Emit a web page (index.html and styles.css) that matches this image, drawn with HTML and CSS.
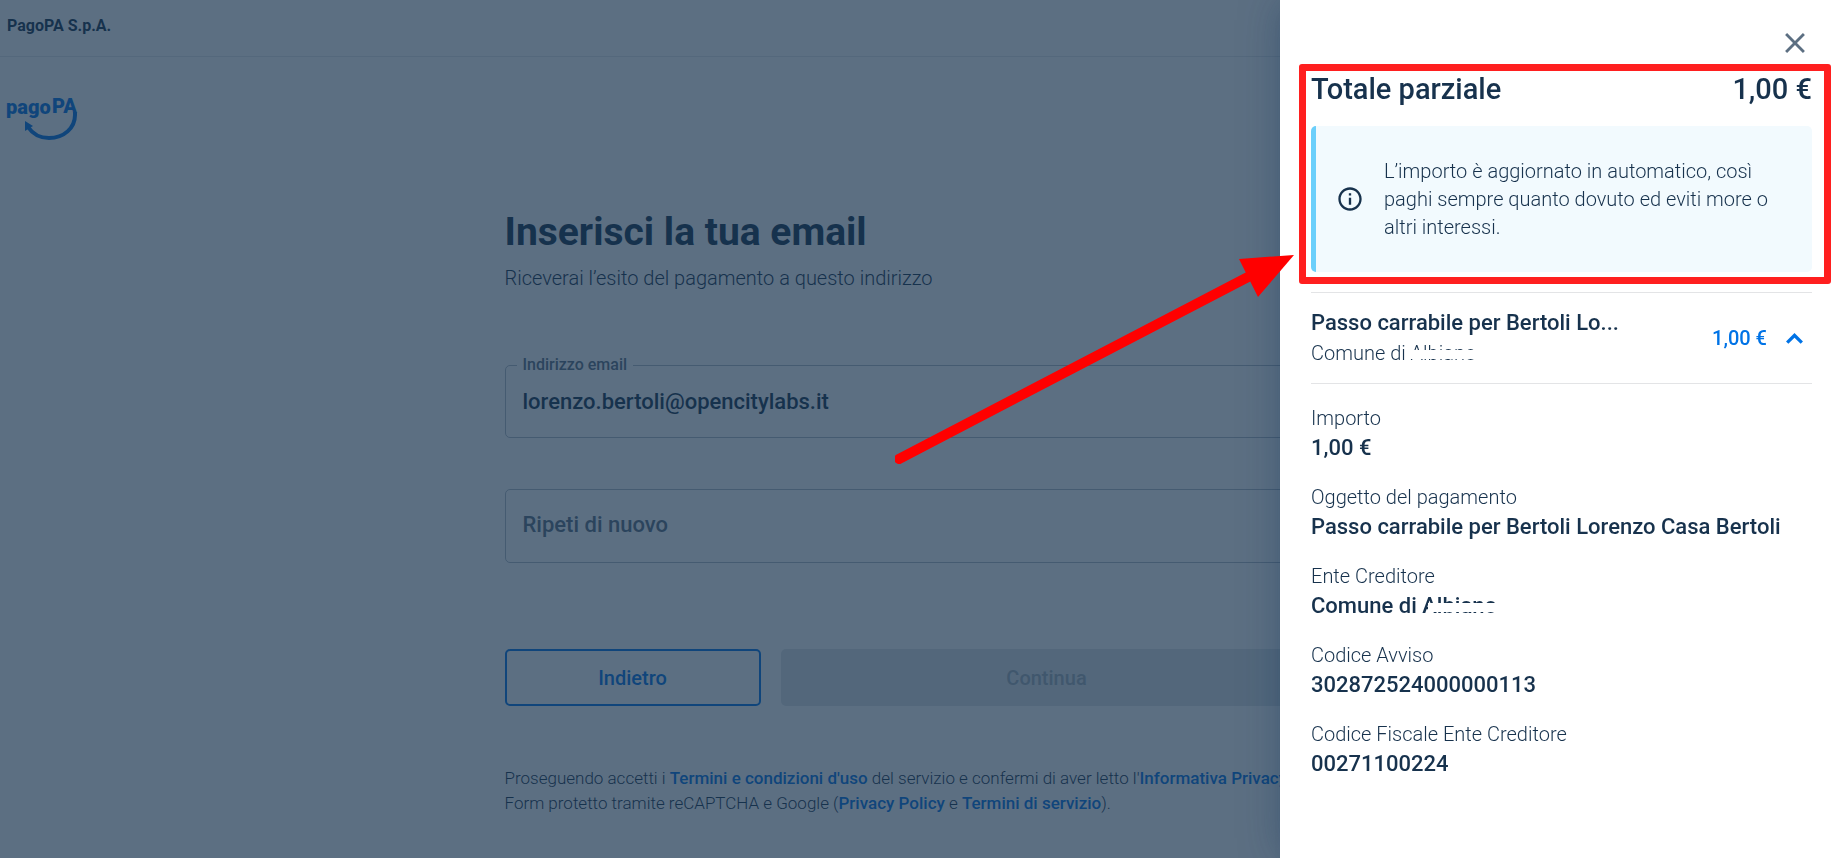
FILE: index.html
```html
<!DOCTYPE html>
<html lang="it">
<head>
    <meta charset="UTF-8">
    <title>pagoPA</title>
    <link rel="stylesheet" href="styles.css">
</head>
<body>
<div class="page">
    <header class="topbar">PagoPA S.p.A.</header>
    <div class="brand">
        <svg class="logo" width="74" height="46" viewBox="0 0 74 46">
            <text x="-1" y="19" font-size="20">pago</text>
            <text x="45" y="18" font-size="20">PA</text>
            <path d="M68 17V20C68 33 57 43 42 43C32 43 25 38 21 32" fill="none" stroke="#0073e6" stroke-width="4"/>
            <path d="M18 26L26 31L18 36Z"/>
        </svg>
    </div>
    <main class="content">
        <h1>Inserisci la tua email</h1>
        <p class="subtitle">Riceverai l’esito del pagamento a questo indirizzo</p>
        <form>
            <fieldset class="field">
                <legend><label for="email">Indirizzo email</label></legend>
                <input type="email" id="email" value="lorenzo.bertoli@opencitylabs.it">
            </fieldset>
            <div class="field repeat">
                <input type="email" id="confirm" placeholder="Ripeti di nuovo" aria-label="Ripeti di nuovo">
            </div>
            <div class="buttons">
                <button type="button" class="back">Indietro</button>
                <button type="submit" class="next" disabled>Continua</button>
            </div>
        </form>
        <p class="legal">
            Proseguendo accetti i <a href="#">Termini e condizioni d'uso</a> del servizio e confermi di aver letto l'<a href="#">Informativa Privacy</a><br>
            Form protetto tramite reCAPTCHA e Google (<a href="#">Privacy Policy</a> e <a href="#">Termini di servizio</a>).
        </p>
    </main>
</div>

<div class="backdrop"></div>

<aside class="drawer">
    <button type="button" class="close" aria-label="Chiudi">
        <svg width="34" height="34" viewBox="0 0 24 24" fill="#5c6f82"><path d="M19 6.41L17.59 5L12 10.59L6.41 5L5 6.41L10.59 12L5 17.59L6.41 19L12 13.41L17.59 19L19 17.59L13.41 12Z"/></svg>
    </button>
    <div class="total">
        <h2>Totale parziale</h2>
        <span>1,00 €</span>
    </div>
    <div class="alert">
        <svg width="28" height="28" viewBox="0 0 24 24" fill="#17324d"><path d="M11 7h2v2h-2zm0 4h2v6h-2zm1-9C6.480 2 2 6.480 2 12s4.480 10 10 10 10-4.480 10-10S17.520 2 12 2zm0 18c-4.410 0-8-3.590-8-8s3.590-8 8-8 8 3.590 8 8-3.590 8-8 8z"/></svg>
        <p>L’importo è aggiornato in automatico, così paghi sempre quanto dovuto ed eviti more o altri interessi.</p>
    </div>
    <button type="button" class="item">
        <span class="item-text">
            <strong>Passo carrabile per Bertoli Lo...</strong>
            <span class="name">Comune di <span class="erased">Albiano</span></span>
        </span>
        <span class="price">1,00 €</span>
        <svg width="29" height="29" viewBox="0 0 24 24" fill="#0073e6"><path d="M12 7.500l-7 7 1.900 1.900L12 11.300l5.100 5.100L19 14.500z"/></svg>
    </button>
    <dl class="details">
        <dt>Importo</dt>
        <dd>1,00 €</dd>
        <dt>Oggetto del pagamento</dt>
        <dd>Passo carrabile per Bertoli Lorenzo Casa Bertoli</dd>
        <dt>Ente Creditore</dt>
        <dd>Comune di <span class="erased">Albiano</span></dd>
        <dt>Codice Avviso</dt>
        <dd>302872524000000113</dd>
        <dt>Codice Fiscale Ente Creditore</dt>
        <dd>00271100224</dd>
    </dl>
    <div class="highlight"></div>
    <svg class="arrow" width="400" height="210" viewBox="0 0 400 210">
        <path d="M4 205L353 23" stroke="#f00" stroke-width="10" stroke-linecap="round"/>
        <path d="M344 5L399 1L363 43Z" fill="#f00"/>
    </svg>
</aside>
</body>
</html>
```

FILE: styles.css
```css
* {
    box-sizing: border-box;
    margin: 0;
    padding: 0;
}
body {
    font-family: Roboto, "Liberation Sans", sans-serif;
    font-size: 20px;
    font-weight: 350;
    color: #17324d;
    background: #fff;
    overflow: hidden;
}
button, input {
    font: inherit;
    color: inherit;
    background: none;
    border: 0;
}
a {
    color: #0073e6;
    font-weight: 500;
    text-decoration: none;
}
.page {
    min-height: 100vh;
}
.topbar {
    height: 57px;
    padding: 0 7px;
    line-height: 52px;
    font-size: 16px;
    font-weight: 700;
    border-bottom: 1px solid #e3e7eb;
}
.brand {
    height: 147px;
    padding: 38px 7px 0;
}
.logo {
    display: block;
    overflow: visible;
    fill: #0073e6;
    font-weight: 900;
}
.content {
    width: 832px;
    max-width: 100%;
    margin: 0 auto;
    padding-right: 24px;
}
h1 {
    line-height: 57px;
    font-size: 39px;
    font-weight: 700;
}
.subtitle {
    line-height: 34px;
}
.field {
    height: 83px;
    margin-top: 60px;
    border: 1px solid #b1bbc6;
    border-radius: 5px;
    font-size: 22px;
    font-weight: 500;
}
.field legend {
    margin-left: 11px;
    padding: 0 6px;
    line-height: 20px;
    font-size: 16px;
    color: #5c6f82;
}
.field input {
    display: block;
    width: 100%;
    height: 52px;
    padding: 0 17px;
    outline: 0;
}
.field input::placeholder {
    color: #5c6f82;
    opacity: 1;
}
.repeat {
    height: 74px;
    margin-top: 51px;
}
.repeat input {
    height: 68px;
}
.buttons {
    display: grid;
    grid-template-columns: 256fr 532fr;
    gap: 20px;
    margin-top: 86px;
}
.buttons button {
    height: 57px;
    border-radius: 5px;
    font-weight: 500;
}
.back {
    border: 2px solid #0073e6;
    color: #0073e6;
}
.buttons .next {
    color: #a2adb8;
    background: #dfe5e8;
}
.legal {
    margin-top: 60px;
    line-height: 25px;
    font-size: 17px;
    white-space: nowrap;
}
.backdrop {
    position: fixed;
    inset: 0;
    background: rgba(23, 50, 77, 0.7);
}
.drawer {
    position: fixed;
    top: 0;
    right: 0;
    bottom: 0;
    width: 561px;
    padding: 26px 29px 0 31px;
    background: #fff;
    box-shadow: 0 10px 12px -6px rgba(0, 43, 85, 0.1), 0 0 40px rgba(0, 43, 85, 0.3);
}
.close {
    display: block;
    width: 34px;
    height: 34px;
    margin: 0 0 3px auto;
}
.total {
    display: flex;
    justify-content: space-between;
    margin-bottom: 11px;
    line-height: 52px;
    font-size: 29px;
    font-weight: 500;
}
.total h2 {
    font: inherit;
}
.alert {
    display: flex;
    align-items: center;
    gap: 20px;
    height: 146px;
    padding: 0 30px 0 20px;
    border-left: 5px solid #6bcffb;
    border-radius: 5px;
    background: #f2fafe;
    line-height: 28px;
}
.alert svg, .item svg {
    flex: none;
}
.item {
    display: flex;
    align-items: center;
    gap: 13px;
    width: 100%;
    height: 92px;
    margin-top: 20px;
    padding-right: 3px;
    border-top: 1px solid #e3e4e6;
    border-bottom: 1px solid #e3e4e6;
    text-align: left;
}
.item-text {
    flex: 1;
}
.item-text strong, .name {
    display: block;
    line-height: 30px;
}
.item-text strong {
    font-size: 22px;
    font-weight: 500;
}
.price {
    color: #0073e6;
    font-weight: 500;
}
.details {
    margin-top: 20px;
}
.details dt {
    line-height: 28px;
}
.details dd {
    margin-bottom: 19px;
    line-height: 32px;
    font-size: 22px;
    font-weight: 500;
}
/* name rubbed out through the middle */
.erased {
    position: relative;
}
.erased::after {
    content: "";
    position: absolute;
    left: 6px;
    right: -4px;
    top: 10px;
    height: 9px;
    background: #fff;
}
.name .erased::after {
    left: 0;
    top: 9px;
}
.highlight {
    position: absolute;
    top: 64px;
    left: 19px;
    right: 10px;
    height: 220px;
    border: 7px solid #ff1f1f;
    border-radius: 3px;
}
.arrow {
    position: absolute;
    top: 254px;
    left: -385px;
}
```
